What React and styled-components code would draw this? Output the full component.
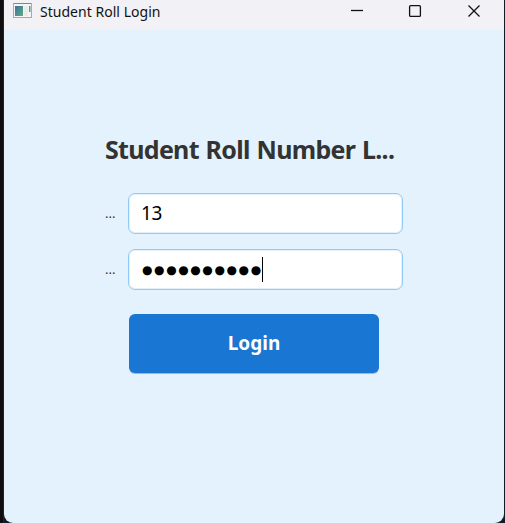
import React from 'react';
import styled, { createGlobalStyle } from 'styled-components';

const Global = createGlobalStyle`
  * { box-sizing: border-box; }
  body { margin: 0; background: #0b0b12; font-family: "Noto Sans", "Open Sans", sans-serif; overflow: hidden; }
`;

const Desktop = styled.div`
  height: 523px;
  padding: 0 1px 0 4px;
  background: linear-gradient(90deg, #100d10 0 3px, #23222a 3px 4px, #151b24 4px);
`;

const Window = styled.main`
  height: 523px;
  display: flex;
  flex-direction: column;
  background: #e3f2fd;
  border-radius: 0 0 9px 9px;
  overflow: hidden;
`;

const TitleBar = styled.header`
  height: 30px;
  flex: none;
  display: flex;
  align-items: flex-start;
  background: #f2f1f6;
  color: #111;
`;

const AppIcon = styled.svg`
  margin: 2px 0 0 9px;
  flex: none;
`;

const Caption = styled.span`
  margin: 2px auto 0 8px;
  font-size: 14px;
  line-height: 20px;
  letter-spacing: 0.03px;
  white-space: nowrap;
`;

const Controls = styled.svg`
  flex: none;
  margin-right: 24px;
`;

const Form = styled.form`
  width: 298px;
  margin: 102px 0 0 101px;
  display: flex;
  flex-direction: column;
`;

const Heading = styled.h1`
  margin: 0 0 27px;
  height: 34px;
  font-size: 25px;
  line-height: 34px;
  font-weight: 700;
  letter-spacing: -0.7px;
  word-spacing: 1px;
  color: #333;
  white-space: nowrap;
`;

const Row = styled.div`
  display: flex;
  height: 41px;
  margin-bottom: 15px;
`;

const Label = styled.label`
  width: 23px;
  font-size: 13px;
  line-height: 41px;
  color: #333;
`;

const Field = styled.div`
  width: 275px;
  height: 41px;
  display: flex;
  align-items: center;
  padding-left: 12px;
  border: 1px solid #90caf9;
  border-radius: 7px;
  background: #fff;
  box-shadow: inset 0 0 0 1px #e1f1fe;
  color: #000;
`;

const Value = styled.span`
  font-size: 19px;
  line-height: 38px;
  letter-spacing: -0.4px;
  margin-bottom: 2px;
`;

const Mask = styled.span`
  font-family: "DejaVu Sans", sans-serif;
  font-size: 12px;
  line-height: 38px;
  letter-spacing: 1.6px;
  margin-left: 1px;
`;

const Caret = styled.i`
  width: 1px;
  height: 25px;
  margin-left: -1px;
  background: #000;
`;

const Submit = styled.button`
  width: 250px;
  height: 59px;
  margin: 9px 0 0 24px;
  padding: 0;
  border: 0;
  border-radius: 6px;
  background: #1976d2;
  box-shadow: 0 1px 0 #8dbceb;
  color: #fff;
  font: 700 19px/57px "Noto Sans", sans-serif;
`;

export default function App() {
  return (
    <>
      <Global />
      <Desktop>
        <Window>
          <TitleBar>
            <AppIcon width="19" height="17" viewBox="0 0 19 17">
              <defs>
                <linearGradient id="pane" x1="0" y1="0" x2="1" y2="1">
                  <stop offset="0" stopColor="#3d6f98" />
                  <stop offset="1" stopColor="#5fae84" />
                </linearGradient>
              </defs>
              <rect x=".5" y="1.5" width="18" height="14" fill="#f5f5f5" stroke="#a8a8ae" />
              <path d="M1 1.5h17" stroke="#85858b" />
              <rect x="2" y="4" width="8" height="10" fill="url(#pane)" />
              <rect x="11" y="4" width="4" height="10" fill="#e9ecea" />
              <rect x="16" y="4" width="1.5" height="6" fill="#5d9f93" />
            </AppIcon>
            <Caption>Student Roll Login</Caption>
            <Controls width="130" height="22" viewBox="0 0 130 22" fill="none" stroke="#111" strokeWidth="1.3">
              <path d="M1 10.5h12" />
              <rect x="59.6" y="5.6" width="10.8" height="10.8" rx="1" />
              <path d="M118.5 5.5l11 11M129.5 5.5l-11 11" />
            </Controls>
          </TitleBar>
          <Form>
            <Heading>Student Roll Number L...</Heading>
            <Row>
              <Label>...</Label>
              <Field><Value>13</Value></Field>
            </Row>
            <Row>
              <Label>...</Label>
              <Field><Mask>●●●●●●●●●●</Mask><Caret /></Field>
            </Row>
            <Submit type="button">Login</Submit>
          </Form>
        </Window>
      </Desktop>
    </>
  );
}
